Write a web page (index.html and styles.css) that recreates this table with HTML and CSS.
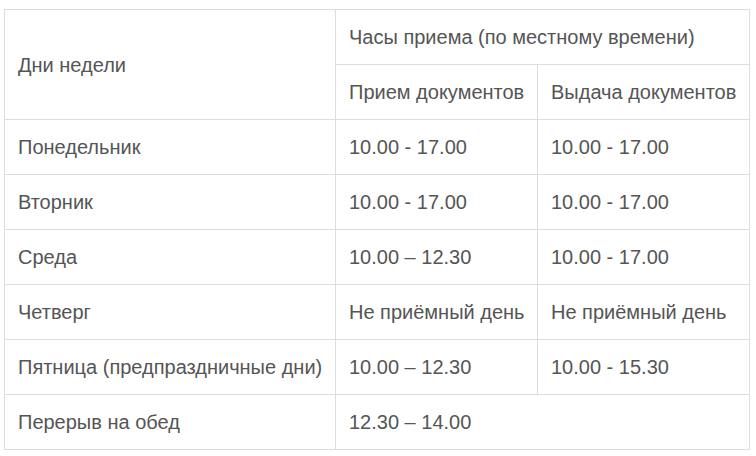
FILE: index.html
```html
<!DOCTYPE html>
<html lang="ru">
<head>
<meta charset="utf-8">
<link rel="stylesheet" href="styles.css">
</head>
<body>
<table class="schedule">
  <colgroup>
    <col class="c1"><col class="c2"><col class="c3">
  </colgroup>
  <tr>
    <td rowspan="2">Дни недели</td>
    <td colspan="2">Часы приема (по местному времени)</td>
  </tr>
  <tr>
    <td>Прием документов</td>
    <td>Выдача документов</td>
  </tr>
  <tr><td>Понедельник</td><td>10.00 - 17.00</td><td>10.00 - 17.00</td></tr>
  <tr><td>Вторник</td><td>10.00 - 17.00</td><td>10.00 - 17.00</td></tr>
  <tr><td>Среда</td><td>10.00 – 12.30</td><td>10.00 - 17.00</td></tr>
  <tr><td>Четверг</td><td>Не приёмный день</td><td>Не приёмный день</td></tr>
  <tr><td>Пятница (предпраздничные дни)</td><td>10.00 – 12.30</td><td>10.00 - 15.30</td></tr>
  <tr><td>Перерыв на обед</td><td colspan="2">12.30 – 14.00</td></tr>
</table>
</body>
</html>
```
FILE: styles.css
```css
html, body {
  margin: 0;
  background: #fff;
}
body {
  padding: 9px 0 0 4px;
  font-family: "Liberation Sans", Arial, sans-serif;
  font-size: 20px;
  color: #555;
}
.schedule {
  border-collapse: collapse;
  table-layout: fixed;
  width: 746px;
}
.c1 { width: 331px; }
.c2 { width: 202px; }
.c3 { width: 212px; }
.schedule td {
  border: 1px solid #ddd;
  height: 55px;
  padding: 0 0 0 13px;
  box-sizing: border-box;
  vertical-align: middle;
  white-space: nowrap;
  line-height: 22px;
}
```
